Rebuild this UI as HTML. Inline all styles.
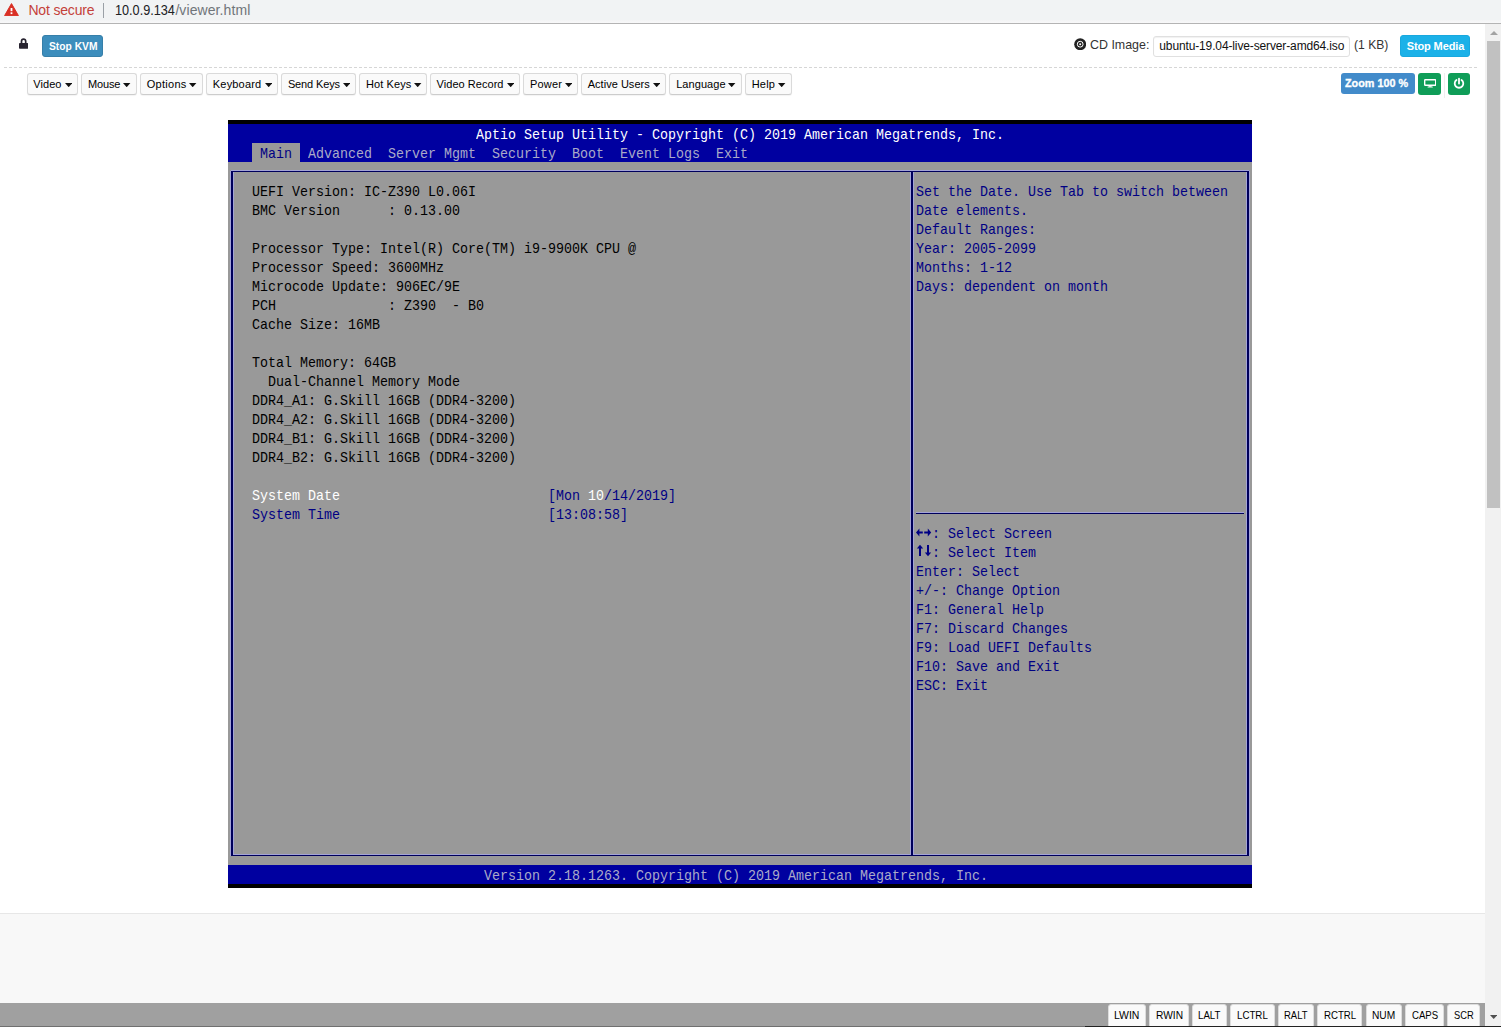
<!DOCTYPE html>
<html>
<head>
<meta charset="utf-8">
<title>viewer</title>
<style>
html,body{margin:0;padding:0;}
body{width:1501px;height:1027px;overflow:hidden;position:relative;background:#fff;font-family:"Liberation Sans",sans-serif;}
.abs{position:absolute;}
.tx{white-space:pre;}
#addr{left:0;top:0;width:1501px;height:23px;background:#f1f3f4;border-bottom:1px solid #b4b4b4;}
.btn{position:absolute;box-sizing:border-box;border-radius:3px;}
.mbtn{top:73px;height:21.5px;border:1px solid #dadada;border-bottom-color:#ccc;background:#fafafa;box-shadow:0 1px 1px rgba(0,0,0,.05);}
.kbtn{top:1004px;height:26px;border:1px solid #ddd;background:#fafafa;}
#bios{left:228px;top:120px;width:1024px;height:768px;background:#000;overflow:hidden;}
#bios .bg{position:absolute;}
.t{position:absolute;font-family:"Liberation Mono",monospace;font-size:15px;line-height:19px;height:19px;margin-top:2px;white-space:pre;color:#000;transform:scaleX(0.888889);transform-origin:0 0;}
.b{color:#000084;}
.w{color:#fff;}
.g{color:#aaaac8;}
.ln{position:absolute;background:#00005c;}
.hl{position:absolute;background:#a4a4d6;}
</style>
</head>
<body>
<div id="addr" class="abs"></div>
<div class="abs" style="left:0;top:20px;width:1501px;height:3px;background:linear-gradient(#f3f4f5,#f8f8f9);"></div>
<svg class="abs" style="left:4px;top:3px" width="15" height="13" viewBox="0 0 15 13"><path d="M7.5 0.6 L14.4 12.6 L0.6 12.6 Z" fill="#d93025" stroke="#d93025" stroke-width="1" stroke-linejoin="round"/><rect x="6.6" y="5" width="1.8" height="3.2" fill="#fff"/><rect x="6.6" y="9.3" width="1.8" height="1.8" fill="#fff"/></svg>
<div class="abs tx" style="left:28.4px;top:0px;font-size:14px;line-height:20px;color:#c4413a;font-weight:400;letter-spacing:-0.170px;">Not secure</div>
<div class="abs" style="left:103px;top:3px;width:1px;height:15px;background:#9aa0a6;"></div>
<div class="abs tx" style="left:114.6px;top:0px;font-size:14px;line-height:20px;color:#202124;font-weight:400;letter-spacing:0;transform-origin:0 0;transform:scaleX(0.9052);">10.0.9.134</div>
<div class="abs tx" style="left:175.4px;top:0px;font-size:14px;line-height:20px;color:#70757a;font-weight:400;letter-spacing:0.090px;">/viewer.html</div>
<svg class="abs" style="left:19px;top:38px" width="9.2" height="11" viewBox="0 0 9.2 11"><path d="M2.5 5.4V3.2A2.1 2.1 0 0 1 6.7 3.2V5.4" fill="none" stroke="#282430" stroke-width="1.7"/><rect x="0" y="5" width="9.2" height="5.8" rx="0.8" fill="#282430"/></svg>
<div class="btn" style="left:42px;top:35px;width:61px;height:22px;background:#3c8dbc;border:1px solid #367fa9;"></div>
<div class="abs tx" style="left:48.6px;top:36px;font-size:11px;line-height:20px;color:#fff;font-weight:700;letter-spacing:0;transform-origin:0 0;transform:scaleX(0.9335);">Stop KVM</div>
<svg class="abs" style="left:1073.8px;top:37.5px" width="12.4" height="12.4" viewBox="0 0 12.4 12.4"><circle cx="6.2" cy="6.2" r="6" fill="#222"/><circle cx="6.2" cy="6.2" r="2.9" fill="none" stroke="#fff" stroke-width="1"/><circle cx="6.2" cy="6.2" r="1" fill="#fff"/></svg>
<div class="abs tx" style="left:1090px;top:35px;font-size:13px;line-height:20px;color:#333;font-weight:400;letter-spacing:0;transform-origin:0 0;transform:scaleX(0.9559);">CD Image:</div>
<div class="abs" style="left:1153px;top:35.5px;width:197px;height:21px;box-sizing:border-box;border:1px solid #e0e0e0;border-radius:3px;background:#fff;box-shadow:inset 0 1px 1px rgba(0,0,0,.06);"></div>
<div class="abs tx" style="left:1159.3px;top:37px;font-size:12px;line-height:19px;color:#111;font-weight:400;letter-spacing:-0.131px;">ubuntu-19.04-live-server-amd64.iso</div>
<div class="abs tx" style="left:1354px;top:35px;font-size:13px;line-height:20px;color:#333;font-weight:400;letter-spacing:0;transform-origin:0 0;transform:scaleX(0.9337);">(1 KB)</div>
<div class="btn" style="left:1400px;top:35px;width:70px;height:22px;background:#1bb1e8;border:1px solid #18a8de;"></div>
<div class="abs tx" style="left:1406.7px;top:36px;font-size:11px;line-height:20px;color:#fff;font-weight:700;letter-spacing:-0.117px;">Stop Media</div>
<div class="abs" style="left:4px;top:67px;width:1473px;height:0;border-top:1px dashed #d6d6d6;"></div>
<div class="btn mbtn" style="left:27.3px;width:50.5px;"></div>
<div class="abs tx" style="left:33.3px;top:74px;font-size:11px;line-height:20px;color:#000;font-weight:400;letter-spacing:0.053px;">Video</div>
<svg class="abs" style="left:64.6px;top:83px" width="7.4" height="4.2" viewBox="0 0 7.4 4.2"><path d="M0 0H7.4L3.7 4.2Z" fill="#111"/></svg>
<div class="btn mbtn" style="left:81.1px;width:55.9px;"></div>
<div class="abs tx" style="left:88px;top:74px;font-size:11px;line-height:20px;color:#000;font-weight:400;letter-spacing:-0.166px;">Mouse</div>
<svg class="abs" style="left:123.3px;top:83px" width="7.4" height="4.2" viewBox="0 0 7.4 4.2"><path d="M0 0H7.4L3.7 4.2Z" fill="#111"/></svg>
<div class="btn mbtn" style="left:140.1px;width:62.7px;"></div>
<div class="abs tx" style="left:146.7px;top:74px;font-size:11px;line-height:20px;color:#000;font-weight:400;letter-spacing:0.283px;">Options</div>
<svg class="abs" style="left:189.2px;top:83px" width="7.4" height="4.2" viewBox="0 0 7.4 4.2"><path d="M0 0H7.4L3.7 4.2Z" fill="#111"/></svg>
<div class="btn mbtn" style="left:206.0px;width:71.9px;"></div>
<div class="abs tx" style="left:212.8px;top:74px;font-size:11px;line-height:20px;color:#000;font-weight:400;letter-spacing:0.188px;">Keyboard</div>
<svg class="abs" style="left:264.5px;top:83px" width="7.4" height="4.2" viewBox="0 0 7.4 4.2"><path d="M0 0H7.4L3.7 4.2Z" fill="#111"/></svg>
<div class="btn mbtn" style="left:281.1px;width:74.9px;"></div>
<div class="abs tx" style="left:287.9px;top:74px;font-size:11px;line-height:20px;color:#000;font-weight:400;letter-spacing:-0.123px;">Send Keys</div>
<svg class="abs" style="left:342.5px;top:83px" width="7.4" height="4.2" viewBox="0 0 7.4 4.2"><path d="M0 0H7.4L3.7 4.2Z" fill="#111"/></svg>
<div class="btn mbtn" style="left:359.1px;width:67.7px;"></div>
<div class="abs tx" style="left:365.9px;top:74px;font-size:11px;line-height:20px;color:#000;font-weight:400;letter-spacing:0.120px;">Hot Keys</div>
<svg class="abs" style="left:414.3px;top:83px" width="7.4" height="4.2" viewBox="0 0 7.4 4.2"><path d="M0 0H7.4L3.7 4.2Z" fill="#111"/></svg>
<div class="btn mbtn" style="left:430.1px;width:89.9px;"></div>
<div class="abs tx" style="left:436.6px;top:74px;font-size:11px;line-height:20px;color:#000;font-weight:400;letter-spacing:0.037px;">Video Record</div>
<svg class="abs" style="left:506.6px;top:83px" width="7.4" height="4.2" viewBox="0 0 7.4 4.2"><path d="M0 0H7.4L3.7 4.2Z" fill="#111"/></svg>
<div class="btn mbtn" style="left:523.3px;width:54.3px;"></div>
<div class="abs tx" style="left:529.9px;top:74px;font-size:11px;line-height:20px;color:#000;font-weight:400;letter-spacing:0.242px;">Power</div>
<svg class="abs" style="left:564.8px;top:83px" width="7.4" height="4.2" viewBox="0 0 7.4 4.2"><path d="M0 0H7.4L3.7 4.2Z" fill="#111"/></svg>
<div class="btn mbtn" style="left:580.9px;width:84.9px;"></div>
<div class="abs tx" style="left:587.7px;top:74px;font-size:11px;line-height:20px;color:#000;font-weight:400;letter-spacing:0.029px;">Active Users</div>
<svg class="abs" style="left:652.9px;top:83px" width="7.4" height="4.2" viewBox="0 0 7.4 4.2"><path d="M0 0H7.4L3.7 4.2Z" fill="#111"/></svg>
<div class="btn mbtn" style="left:669.4px;width:72.2px;"></div>
<div class="abs tx" style="left:676.2px;top:74px;font-size:11px;line-height:20px;color:#000;font-weight:400;letter-spacing:0.056px;">Language</div>
<svg class="abs" style="left:728.4px;top:83px" width="7.4" height="4.2" viewBox="0 0 7.4 4.2"><path d="M0 0H7.4L3.7 4.2Z" fill="#111"/></svg>
<div class="btn mbtn" style="left:745.4px;width:46.3px;"></div>
<div class="abs tx" style="left:751.7px;top:74px;font-size:11px;line-height:20px;color:#000;font-weight:400;letter-spacing:0.194px;">Help</div>
<svg class="abs" style="left:778.2px;top:83px" width="7.4" height="4.2" viewBox="0 0 7.4 4.2"><path d="M0 0H7.4L3.7 4.2Z" fill="#111"/></svg>
<div class="btn" style="left:1341px;top:73px;width:74px;height:21px;background:#428bca;"></div>
<div class="abs tx" style="left:1345px;top:72.6px;font-size:11.5px;line-height:21px;color:#fff;font-weight:700;letter-spacing:0;transform-origin:0 0;transform:scaleX(0.9388);-webkit-text-stroke:0.35px #fff;">Zoom 100 %</div>
<div class="btn" style="left:1418px;top:73px;width:23px;height:22px;background:#0f9d58;"></div>
<svg class="abs" style="left:1423.6px;top:78.8px" width="12.4" height="9" viewBox="0 0 12.4 9"><rect x="0.7" y="0.7" width="11" height="5.6" rx="0.5" fill="none" stroke="#fff" stroke-width="1.4"/><path d="M5 6.5H7.4L7.8 7.8H4.6Z" fill="#fff"/><rect x="3.6" y="7.6" width="5.2" height="0.9" fill="#fff"/></svg>
<div class="abs" style="left:1444px;top:73px;width:1px;height:25px;background:#eee;"></div>
<div class="btn" style="left:1448px;top:73px;width:22px;height:22px;background:#0f9d58;"></div>
<svg class="abs" style="left:1453.25px;top:77px" width="12" height="13" viewBox="0 0 12 13"><path d="M3.5 2.95A4.3 4.3 0 1 0 8.5 2.95" fill="none" stroke="#fff" stroke-width="1.8" stroke-linecap="round"/><path d="M6 1.7V6.6" stroke="#fff" stroke-width="1.8" stroke-linecap="round"/></svg>
<div id="bios" class="abs">
<div class="bg" style="left:0;top:4px;width:1024px;height:38px;background:#0000a0;"></div>
<div class="bg" style="left:0;top:42px;width:1024px;height:703px;background:#999;"></div>
<div class="bg" style="left:0;top:745px;width:1024px;height:19px;background:#0000a0;"></div>
<div class="bg" style="left:24px;top:23px;width:48px;height:19px;background:#999;"></div>
<div class="t w" style="left:248px;top:4px">Aptio Setup Utility - Copyright (C) 2019 American Megatrends, Inc.</div>
<div class="t b" style="left:32px;top:23px">Main</div>
<div class="t g" style="left:80px;top:23px">Advanced  Server Mgmt  Security  Boot  Event Logs  Exit</div>
<div class="t " style="left:24px;top:61px">UEFI Version: IC-Z390 L0.06I</div>
<div class="t " style="left:24px;top:80px">BMC Version      : 0.13.00</div>
<div class="t " style="left:24px;top:118px">Processor Type: Intel(R) Core(TM) i9-9900K CPU @</div>
<div class="t " style="left:24px;top:137px">Processor Speed: 3600MHz</div>
<div class="t " style="left:24px;top:156px">Microcode Update: 906EC/9E</div>
<div class="t " style="left:24px;top:175px">PCH              : Z390  - B0</div>
<div class="t " style="left:24px;top:194px">Cache Size: 16MB</div>
<div class="t " style="left:24px;top:232px">Total Memory: 64GB</div>
<div class="t " style="left:40px;top:251px">Dual-Channel Memory Mode</div>
<div class="t " style="left:24px;top:270px">DDR4_A1: G.Skill 16GB (DDR4-3200)</div>
<div class="t " style="left:24px;top:289px">DDR4_A2: G.Skill 16GB (DDR4-3200)</div>
<div class="t " style="left:24px;top:308px">DDR4_B1: G.Skill 16GB (DDR4-3200)</div>
<div class="t " style="left:24px;top:327px">DDR4_B2: G.Skill 16GB (DDR4-3200)</div>
<div class="t w" style="left:24px;top:365px">System Date</div>
<div class="t b" style="left:320px;top:365px">[Mon </div>
<div class="t w" style="left:360px;top:365px">10</div>
<div class="t b" style="left:376px;top:365px">/14/2019]</div>
<div class="t b" style="left:24px;top:384px">System Time</div>
<div class="t b" style="left:320px;top:384px">[13:08:58]</div>
<div class="t b" style="left:688px;top:61px">Set the Date. Use Tab to switch between</div>
<div class="t b" style="left:688px;top:80px">Date elements.</div>
<div class="t b" style="left:688px;top:99px">Default Ranges:</div>
<div class="t b" style="left:688px;top:118px">Year: 2005-2099</div>
<div class="t b" style="left:688px;top:137px">Months: 1-12</div>
<div class="t b" style="left:688px;top:156px">Days: dependent on month</div>
<div class="t b" style="left:688px;top:403px">  : Select Screen</div>
<div class="t b" style="left:688px;top:422px">  : Select Item</div>
<div class="t b" style="left:688px;top:441px">Enter: Select</div>
<div class="t b" style="left:688px;top:460px">+/-: Change Option</div>
<div class="t b" style="left:688px;top:479px">F1: General Help</div>
<div class="t b" style="left:688px;top:498px">F7: Discard Changes</div>
<div class="t b" style="left:688px;top:517px">F9: Load UEFI Defaults</div>
<div class="t b" style="left:688px;top:536px">F10: Save and Exit</div>
<div class="t b" style="left:688px;top:555px">ESC: Exit</div>
<svg class="abs" style="left:688px;top:403px" width="8" height="19" viewBox="0 0 8 19"><path d="M0 9.5L3.4 5.5V8.5H6.8V10.5H3.4V13.5Z" fill="#000084"/></svg>
<svg class="abs" style="left:696px;top:403px" width="8" height="19" viewBox="0 0 8 19"><path d="M7.2 9.5L3.8 5.5V8.5H0.2V10.5H3.8V13.5Z" fill="#000084"/></svg>
<svg class="abs" style="left:688px;top:422px" width="8" height="19" viewBox="0 0 8 19"><path d="M4 2.8L7.2 6.6H5V14H3V6.6H0.8Z" fill="#000084"/></svg>
<svg class="abs" style="left:696px;top:422px" width="8" height="19" viewBox="0 0 8 19"><path d="M4 14.2L7.2 10.4H5V3H3V10.4H0.8Z" fill="#000084"/></svg>
<div class="t g" style="left:256px;top:745px">Version 2.18.1263. Copyright (C) 2019 American Megatrends, Inc.</div>
<div class="hl" style="left:2px;top:51px;width:4px;height:685px"></div>
<div class="hl" style="left:682px;top:51px;width:4px;height:685px"></div>
<div class="hl" style="left:1018px;top:51px;width:4px;height:685px"></div>
<div class="hl" style="left:3px;top:50px;width:1018px;height:2px"></div>
<div class="hl" style="left:3px;top:734px;width:1018px;height:2px"></div>
<div class="hl" style="left:688px;top:392px;width:328px;height:2px"></div>
<div class="ln" style="left:3px;top:51px;width:2px;height:685px"></div>
<div class="ln" style="left:683px;top:51px;width:2px;height:685px"></div>
<div class="ln" style="left:1019px;top:51px;width:2px;height:685px"></div>
<div class="ln" style="left:3px;top:51px;width:1018px;height:1px"></div>
<div class="ln" style="left:3px;top:735px;width:1018px;height:1px"></div>
<div class="ln" style="left:688px;top:393px;width:328px;height:1px"></div>
</div>
<div class="abs" style="left:0;top:913px;width:1485px;height:90px;background:#f8f8f8;border-top:1px solid #e7e7e7;box-sizing:border-box;"></div>
<div class="abs" style="left:0;top:1003px;width:1485px;height:24px;background:#a0a0a0;"></div>
<div class="btn kbtn" style="left:1108px;width:38px;"></div>
<div class="abs tx" style="left:1114.2px;top:1005px;font-size:11px;line-height:20px;color:#000;font-weight:400;letter-spacing:0;transform-origin:0 0;transform:scaleX(0.9518);">LWIN</div>
<div class="btn kbtn" style="left:1149px;width:40px;"></div>
<div class="abs tx" style="left:1155.5px;top:1005px;font-size:11px;line-height:20px;color:#000;font-weight:400;letter-spacing:0;transform-origin:0 0;transform:scaleX(0.9265);">RWIN</div>
<div class="btn kbtn" style="left:1192px;width:35px;"></div>
<div class="abs tx" style="left:1198.4px;top:1005px;font-size:11px;line-height:20px;color:#000;font-weight:400;letter-spacing:0;transform-origin:0 0;transform:scaleX(0.8790);">LALT</div>
<div class="btn kbtn" style="left:1230px;width:45px;"></div>
<div class="abs tx" style="left:1237.2px;top:1005px;font-size:11px;line-height:20px;color:#000;font-weight:400;letter-spacing:0;transform-origin:0 0;transform:scaleX(0.8839);">LCTRL</div>
<div class="btn kbtn" style="left:1278px;width:36px;"></div>
<div class="abs tx" style="left:1284.2px;top:1005px;font-size:11px;line-height:20px;color:#000;font-weight:400;letter-spacing:0;transform-origin:0 0;transform:scaleX(0.8604);">RALT</div>
<div class="btn kbtn" style="left:1317px;width:45px;"></div>
<div class="abs tx" style="left:1323.8px;top:1005px;font-size:11px;line-height:20px;color:#000;font-weight:400;letter-spacing:0;transform-origin:0 0;transform:scaleX(0.8781);">RCTRL</div>
<div class="btn kbtn" style="left:1366px;width:36px;"></div>
<div class="abs tx" style="left:1372.4px;top:1005px;font-size:11px;line-height:20px;color:#000;font-weight:400;letter-spacing:0;transform-origin:0 0;transform:scaleX(0.9257);">NUM</div>
<div class="btn kbtn" style="left:1405px;width:39px;"></div>
<div class="abs tx" style="left:1411.8px;top:1005px;font-size:11px;line-height:20px;color:#000;font-weight:400;letter-spacing:0;transform-origin:0 0;transform:scaleX(0.8742);">CAPS</div>
<div class="btn kbtn" style="left:1447px;width:33px;"></div>
<div class="abs tx" style="left:1453.8px;top:1005px;font-size:11px;line-height:20px;color:#000;font-weight:400;letter-spacing:0;transform-origin:0 0;transform:scaleX(0.8479);">SCR</div>
<div class="abs" style="left:1485px;top:24px;width:16px;height:1003px;background:#f1f1f1;"></div>
<div class="abs" style="left:1487px;top:41px;width:13px;height:467px;background:#c1c1c1;"></div>
<svg class="abs" style="left:1489.5px;top:30.6px" width="8" height="4" viewBox="0 0 8 4"><path d="M0 4L4 0L8 4Z" fill="#a3a3a3"/></svg>
<svg class="abs" style="left:1490px;top:1015px" width="7.4" height="4" viewBox="0 0 7.4 4"><path d="M0 0L3.7 4L7.4 0Z" fill="#505050"/></svg>
<div class="abs" style="left:0;top:1026px;width:1085px;height:1px;background:#707070;"></div>
<div class="abs" style="left:1085px;top:1026px;width:416px;height:1px;background:#222;"></div>
</body>
</html>
